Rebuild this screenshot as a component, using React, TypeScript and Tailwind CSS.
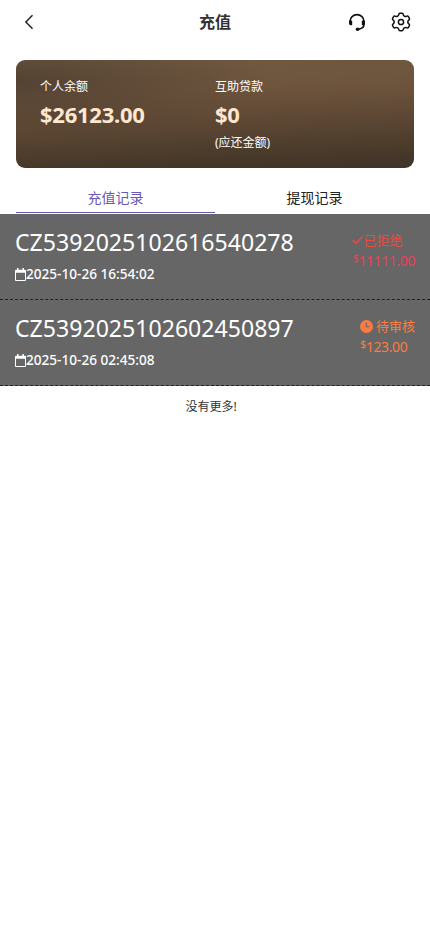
type RecordItem = {
  id: string
  time: string
  amount: string
  status: "rejected" | "pending"
}

const records: RecordItem[] = [
  { id: "CZ5392025102616540278", time: "2025-10-26 16:54:02", amount: "11111.00", status: "rejected" },
  { id: "CZ5392025102602450897", time: "2025-10-26 02:45:08", amount: "123.00", status: "pending" },
]

function BackIcon() {
  return (
    <svg className="block h-4 w-4" viewBox="0 0 16 16" fill="none" stroke="#222" strokeWidth="1.5">
      <path d="M11.5 1.3 4.9 8l6.6 6.7" />
    </svg>
  )
}

function HeadsetIcon() {
  return (
    <svg className="block h-5 w-5" viewBox="0 0 20 20" fill="none" stroke="#111" strokeWidth="1.6">
      <path d="M3 9.5A7 6.9 0 0 1 17 9.5v3.1c0 2.6-2 4.2-6 4.8" />
      <path d="M2.6 8.5h2q.6 0 .6.6v3.6q0 .6-.6.6h-.8q-1.800 0-1.800-1.800V9.100q0-.6.600-.6zM17.400 8.500h-2q-.6 0-.6.600v3.600q0 .6.600.600h.8q1.800 0 1.800-1.800V9.100q0-.6-.6-.6z" fill="#111" stroke="none" />
      <ellipse cx="10.600" cy="17.200" rx="1.900" ry="1.700" fill="#111" stroke="none" />
    </svg>
  )
}

function GearIcon() {
  return (
    <svg className="block h-5 w-5" viewBox="0 0 20 20" fill="none" stroke="#111" strokeWidth="1.5" strokeLinejoin="round">
      <path d="M9 1.2H11Q11.900 1.200 12.100 2.100L12.300 2.900Q12.600 4 13.600 4.300 14.400 4.600 15.200 4.400L16.100 4.100Q17 3.900 17.400 4.600L18.400 6.300Q18.800 7.100 18.200 7.700L17.500 8.400Q16.800 9.100 16.800 10T17.500 11.600L18.200 12.300Q18.800 12.900 18.400 13.700L17.400 15.400Q17 16.100 16.100 15.900L15.200 15.600Q14.400 15.400 13.600 15.700 12.600 16 12.300 17.100L12.100 17.900Q11.900 18.800 11 18.800H9Q8.100 18.800 7.900 17.900L7.700 17.100Q7.400 16 6.400 15.700 5.600 15.400 4.800 15.600L3.900 15.900Q3 16.100 2.600 15.400L1.600 13.700Q1.200 12.900 1.800 12.300L2.500 11.600Q3.200 10.900 3.200 10T2.500 8.400L1.800 7.700Q1.200 7.100 1.600 6.300L2.600 4.600Q3 3.900 3.900 4.100L4.800 4.400Q5.600 4.600 6.400 4.300 7.400 4 7.700 2.900L7.900 2.100Q8.100 1.200 9 1.200Z" />
      <circle cx="10" cy="10" r="2.600" />
    </svg>
  )
}

function CalendarIcon() {
  return (
    <svg className="block h-[13px] w-[11px] shrink-0" viewBox="0 0 11 13" fill="#fff">
      <path d="M2 0h1.500v1.800h4V0H9v1.800h1q1 0 1 1v9.200q0 1-1 1H1q-1 0-1-1V2.800q0-1 1-1h1zM1 4.800V12h9V4.800z" fillRule="evenodd" />
    </svg>
  )
}

function CheckIcon() {
  return (
    <svg className="block h-3 w-[11px] shrink-0" viewBox="0 0 11 12" fill="none" stroke="currentColor" strokeWidth="1.6">
      <path d="M.7 6.300 3.800 9.300 10.500 2.700" />
    </svg>
  )
}

function ClockIcon() {
  return (
    <svg className="mr-[3px] block h-[13px] w-[13px] shrink-0" viewBox="0 0 13 13" fill="none">
      <circle cx="6.5" cy="6.5" r="6.5" fill="currentColor" />
      <path d="M6.3 2.7v4.100h3.200" stroke="#666" strokeWidth="1.1" />
    </svg>
  )
}

function Header() {
  return (
    <header className="grid h-11 grid-cols-3 items-center pl-[21px] pr-[19px]">
      <button className="justify-self-start" aria-label="返回">
        <BackIcon />
      </button>
      <h1 className="pr-0.5 text-center text-[16px] font-bold text-[#323233]">充值</h1>
      <div className="flex items-center gap-6 justify-self-end">
        <HeadsetIcon />
        <GearIcon />
      </div>
    </header>
  )
}

function BalanceCard() {
  return (
    <section className="mx-4 mt-4 grid h-[108px] grid-cols-2 rounded-[9px] bg-[radial-gradient(ellipse_at_0%_20%,rgba(65,54,43,0.6)_0%,transparent_45%),linear-gradient(178deg,#715a41_0%,#6e543d_30%,#5b4633_60%,#463829_88%,#3f3328_100%)] pl-6 pr-6 pt-[17px] text-white">
      <div>
        <p className="text-[12px] leading-5">个人余额</p>
        <p className="text-[22px] font-bold leading-[35px] tracking-[-0.25px] text-[#ffe7d0]">$26123.00</p>
      </div>
      <div>
        <p className="text-[12px] leading-5">互助贷款</p>
        <p className="mb-px text-[22px] font-bold leading-[35px] tracking-[-0.25px] text-[#ffe7d0]">$0</p>
        <p className="text-[12px] leading-5">(应还金额)</p>
      </div>
    </section>
  )
}

function Tabs() {
  return (
    <nav className="mx-4 mt-[15px] grid h-[31px] grid-cols-2 text-center text-[14px] leading-[30px]">
      <button className="h-[30px] border-b border-[#6558a5] text-[#6a58b5]">充值记录</button>
      <button className="h-[30px] text-[#222]">提现记录</button>
    </nav>
  )
}

function RecordRow({ item }: { item: RecordItem }) {
  const rejected = item.status === "rejected"
  return (
    <li className="flex h-[86px] justify-between border-b border-dashed border-[#222] bg-[#666] px-[15px] pt-[11px]">
      <div className="text-white">
        <p className="text-[23.1px] leading-[34px]">{item.id}</p>
        <p className="mt-[5px] flex items-center text-[13.6px] font-medium leading-5">
          <CalendarIcon />
          {item.time}
        </p>
      </div>
      <div className={rejected ? "pt-[5px] text-[#e94b3e]" : "pt-[5px] text-[#fb7c42]"}>
        <p className="flex items-center text-[13px] leading-5">
          {rejected ? <CheckIcon /> : <ClockIcon />}
          {rejected ? "已拒绝" : "待审核"}
        </p>
        <p className={rejected ? "flex text-[14px] leading-[21px] tracking-[-0.4px] text-[#ee3f58]" : "flex text-[14px] leading-[21px] tracking-[-0.4px]"}>
          <span className="text-[11px] leading-[16px]">$</span>
          {item.amount}
        </p>
      </div>
    </li>
  )
}

export default function App() {
  return (
    <main className="min-h-screen bg-white font-['Noto_Sans','Noto_Sans_CJK_SC',sans-serif]">
      <Header />
      <BalanceCard />
      <Tabs />
      <ul>
        {records.map((item) => (
          <RecordRow key={item.id} item={item} />
        ))}
      </ul>
      <p className="pr-2 pt-[11px] text-center text-[12px] leading-5 text-[#333]">没有更多!</p>
    </main>
  )
}
